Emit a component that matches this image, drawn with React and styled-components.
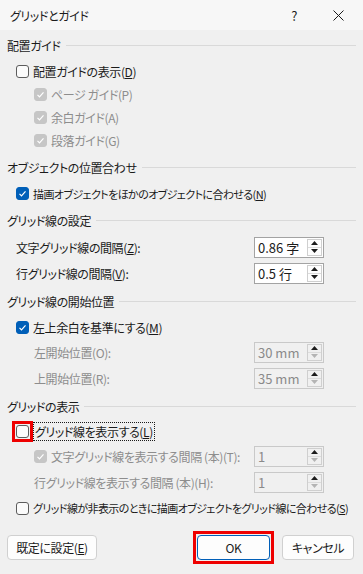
import React from 'react'
import styled, { createGlobalStyle } from 'styled-components'

const GlobalStyle = createGlobalStyle`
  html, body {
    margin: 0;
    padding: 0;
    background: #f0f0f0;
  }
  body {
    font-family: "Noto Sans CJK JP", "Noto Sans", sans-serif;
    font-size: 12px;
    color: #1b1b1b;
    font-feature-settings: "palt";
    letter-spacing: -0.4px;
  }
`

const Dialog = styled.div`
  width: 363px;
  height: 574px;
  background: #f0f0f0;
  display: flex;
  flex-direction: column;
  overflow: hidden;
`
const TitleBar = styled.div`
  height: 30px;
  display: flex;
  align-items: center;
  padding: 0 19px 0 10px;
  background: #f7f7f7;
`
const Title = styled.div`
  flex: 1;
`
const Help = styled.span`
  font-size: 13px;
  margin-right: 36px;
`
const Content = styled.div`
  padding: 5px 7px 0 7px;
`
const Section = styled.section`
  margin-bottom: 5px;
`
const Header = styled.div`
  height: 20px;
  display: flex;
  align-items: center;
  gap: 5px;
  &::after {
    content: '';
    flex: 1;
    height: 1px;
    background: #d9d9d9;
  }
`
const Body = styled.div`
  padding-top: ${p => p.$top ?? 5}px;
`
const Row = styled.div`
  height: ${p => p.$h || 23}px;
  display: flex;
  align-items: center;
  padding-left: ${p => p.$indent || 0}px;
  color: ${p => (p.$disabled ? '#8d8d8d' : 'inherit')};
`
const SpinRow = styled(Row)`
  height: 26px;
  padding-right: 32px;
`
const Label = styled.span`
  flex: 1;
  white-space: nowrap;
  font-size: ${p => p.$size || 12}px;
  letter-spacing: ${p => (p.$ls != null ? `${p.$ls}px` : 'inherit')};
`
const Box = styled.span`
  width: 13px;
  height: 13px;
  box-sizing: border-box;
  border-radius: 3px;
  margin-right: 4px;
  flex: none;
  display: flex;
  align-items: center;
  justify-content: center;
  border: 1px solid ${p => (p.$disabled ? '#c6c6c6' : p.$checked ? '#005fb8' : '#5c5c5c')};
  background: ${p => (p.$disabled ? '#c6c6c6' : p.$checked ? '#005fb8' : '#fbfbfb')};
`
const Ring = styled.span`
  display: flex;
  padding: 1px;
  border: 3px solid #ee0000;
  & > span {
    margin-right: 0;
  }
`
const Focus = styled.span`
  border: 1px dotted #1b1b1b;
  padding: 1px;
  line-height: 15px;
`
const Spin = styled.div`
  width: 70px;
  height: 21px;
  box-sizing: border-box;
  display: flex;
  border: 1px solid ${p => (p.$disabled ? '#c9c9c9' : '#a3a3a3')};
  background: ${p => (p.$disabled ? '#f0f0f0' : '#ffffff')};
  color: ${p => (p.$disabled ? '#8a8a8a' : '#1b1b1b')};
`
const SpinText = styled.div`
  flex: 1;
  display: flex;
  align-items: center;
  padding-left: 3px;
  font-size: 13px;
  letter-spacing: 0;
`
const Arrows = styled.div`
  width: 15px;
  margin: 1px 1px 1px 0;
  display: flex;
  flex-direction: column;
  border: 1px solid #cfcfcf;
  box-sizing: border-box;
  background: ${p => (p.$disabled ? '#f0f0f0' : '#fdfdfd')};
`
const ArrowHalf = styled.div`
  flex: 1;
  display: flex;
  align-items: center;
  justify-content: center;
  & + & {
    border-top: 1px solid #dcdcdc;
  }
`
const Footer = styled.div`
  margin-top: auto;
  display: flex;
  align-items: center;
  padding: 0 9px 10px 7px;
`
const Button = styled.button`
  height: 25px;
  width: ${p => p.$w}px;
  box-sizing: border-box;
  border-radius: 4px;
  border: 1px solid ${p => (p.$primary ? '#005fb8' : '#d0d0d0')};
  background: #fdfdfd;
  font: inherit;
  font-size: 12px;
  letter-spacing: -0.4px;
  color: #1b1b1b;
  padding: 0;
`
const ButtonRing = styled.div`
  display: flex;
  padding: 1px;
  border: 3px solid #ee0000;
  margin-left: auto;
  margin-right: 8px;
`

const Check = ({ checked, disabled }) => (
  <Box $checked={checked} $disabled={disabled}>
    {(checked || disabled) && (
      <svg width="9" height="9" viewBox="0 0 9 9">
        <polyline points="1.5,4.8 3.5,6.8 7.5,2.4" fill="none" stroke="#fff" strokeWidth="1.2" />
      </svg>
    )}
  </Box>
)

const Tri = ({ up, color }) => (
  <svg width="7" height="4" viewBox="0 0 7 4">
    <polygon points={up ? '0,4 7,4 3.5,0' : '0,0 7,0 3.5,4'} fill={color} />
  </svg>
)

const SpinBox = ({ value, disabled }) => (
  <Spin $disabled={disabled}>
    <SpinText>{value}</SpinText>
    <Arrows $disabled={disabled}>
      <ArrowHalf><Tri up color="#1b1b1b" /></ArrowHalf>
      <ArrowHalf><Tri color={disabled ? '#b4b4b4' : '#1b1b1b'} /></ArrowHalf>
    </Arrows>
  </Spin>
)

export default function App() {
  return (
    <Dialog>
      <GlobalStyle />
      <TitleBar>
        <Title>グリッドとガイド</Title>
        <Help>?</Help>
        <svg width="11" height="11" viewBox="0 0 11 11">
          <path d="M0.5 0.5L10.5 10.5M10.5 0.5L0.5 10.5" stroke="#1b1b1b" strokeWidth="1" />
        </svg>
      </TitleBar>
      <Content>
        <Section>
          <Header>配置ガイド</Header>
          <Body>
            <Row $indent={9}>
              <Check />
              <Label>配置ガイドの表示(<u>D</u>)</Label>
            </Row>
            <Row $indent={27} $disabled>
              <Check disabled />
              <Label>ページ ガイド(P)</Label>
            </Row>
            <Row $indent={27} $disabled>
              <Check disabled />
              <Label>余白ガイド(A)</Label>
            </Row>
            <Row $indent={27} $disabled>
              <Check disabled />
              <Label>段落ガイド(G)</Label>
            </Row>
          </Body>
        </Section>
        <Section>
          <Header>オブジェクトの位置合わせ</Header>
          <Body>
            <Row $indent={9}>
              <Check checked />
              <Label $size={11} $ls={-0.6}>描画オブジェクトをほかのオブジェクトに合わせる(<u>N</u>)</Label>
            </Row>
          </Body>
        </Section>
        <Section>
          <Header>グリッド線の設定</Header>
          <Body $top={4}>
            <SpinRow $indent={9}>
              <Label>文字グリッド線の間隔(<u>Z</u>):</Label>
              <SpinBox value="0.86 字" />
            </SpinRow>
            <SpinRow $indent={9}>
              <Label>行グリッド線の間隔(<u>V</u>):</Label>
              <SpinBox value="0.5 行" />
            </SpinRow>
          </Body>
        </Section>
        <Section>
          <Header>グリッド線の開始位置</Header>
          <Body>
            <Row $indent={9}>
              <Check checked />
              <Label>左上余白を基準にする(<u>M</u>)</Label>
            </Row>
            <SpinRow $indent={27} $disabled>
              <Label>左開始位置(O):</Label>
              <SpinBox value="30 mm" disabled />
            </SpinRow>
            <SpinRow $indent={27} $disabled>
              <Label>上開始位置(R):</Label>
              <SpinBox value="35 mm" disabled />
            </SpinRow>
          </Body>
        </Section>
        <Section>
          <Header>グリッドの表示</Header>
          <Body $top={4}>
            <Row $indent={5}>
              <Ring><Check /></Ring>
              <Focus>グリッド線を表示する(<u>L</u>)</Focus>
            </Row>
            <SpinRow $indent={27} $disabled>
              <Check disabled />
              <Label>文字グリッド線を表示する間隔 (本)(T):</Label>
              <SpinBox value="1" disabled />
            </SpinRow>
            <SpinRow $indent={27} $disabled>
              <Label>行グリッド線を表示する間隔 (本)(H):</Label>
              <SpinBox value="1" disabled />
            </SpinRow>
            <Row $indent={9} $h={26}>
              <Check />
              <Label $size={11} $ls={-0.6}>グリッド線が非表示のときに描画オブジェクトをグリッド線に合わせる(<u>S</u>)</Label>
            </Row>
          </Body>
        </Section>
      </Content>
      <Footer>
        <Button $w={90}>既定に設定(<u>E</u>)</Button>
        <ButtonRing>
          <Button $w={73} $primary>OK</Button>
        </ButtonRing>
        <Button $w={72}>キャンセル</Button>
      </Footer>
    </Dialog>
  )
}
